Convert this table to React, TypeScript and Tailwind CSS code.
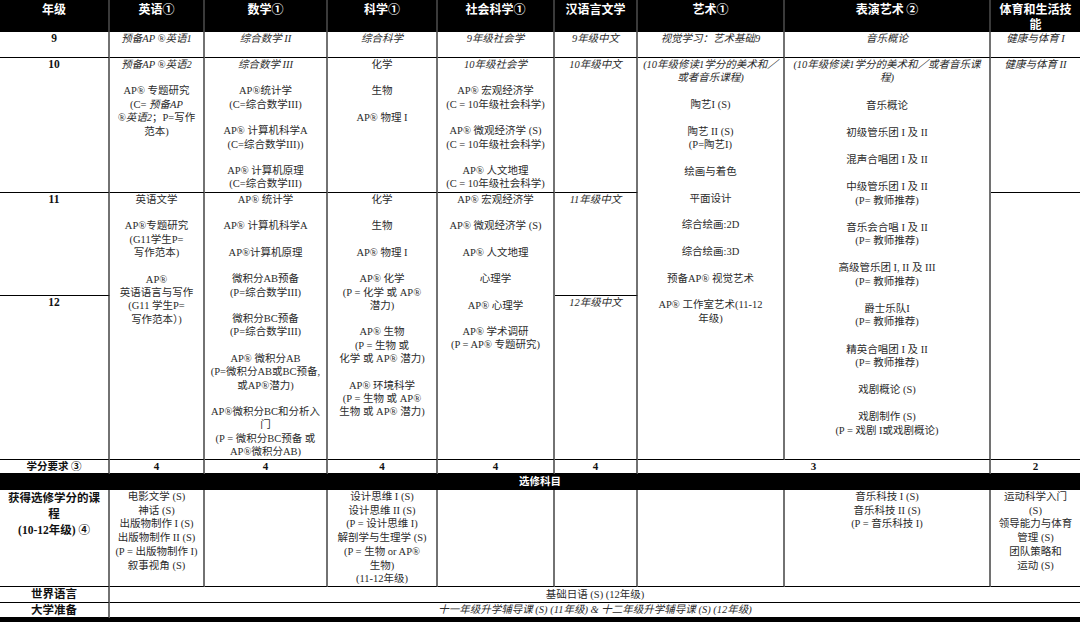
import type { ReactNode } from 'react'

// vertical rules are grey, horizontal rules black, like the printed course chart
const V = 'border-r-2 border-r-[#727272]'
const H = 'border-b border-b-black'
const body = 'flex flex-col items-center gap-[13px] px-[3px] text-center text-[10.5px] leading-[13.4px] text-[#2b2b2b]'

function Cell({ className = '', last = false, children }: { className?: string; last?: boolean; children?: ReactNode }) {
  return <div className={`${H} ${last ? '' : V} ${className}`}>{children}</div>
}

function Head({ className = '', last = false, children }: { className?: string; last?: boolean; children: ReactNode }) {
  return (
    <div className={`bg-black text-white font-bold text-[12px] leading-[15px] text-center px-1 pt-px font-['Noto_Sans_CJK_SC',sans-serif] ${last ? '' : 'border-r-2 border-r-[#3a3a3a]'} ${className}`}>
      {children}
    </div>
  )
}

function P({ lines }: { lines: ReactNode[] }) {
  return (
    <div>
      {lines.map((l, i) => (
        <div key={i} className="whitespace-nowrap">{l}</div>
      ))}
    </div>
  )
}

function Grade({ className, n }: { className: string; n: string }) {
  return (
    <Cell className={`text-center font-bold text-[11.5px] leading-[13.4px] text-[#111] ${className}`}>{n}</Cell>
  )
}

function Credit({ className, n, last = false }: { className: string; n: string; last?: boolean }) {
  return (
    <Cell last={last} className={`text-center font-bold text-[11px] leading-[13px] text-[#111] ${className}`}>{n}</Cell>
  )
}

const tpr = '(P= 教师推荐)'

export default function App() {
  return (
    <div className="w-[1080px] h-[622px] overflow-hidden bg-white font-['Liberation_Serif','Noto_Sans_CJK_SC',serif]">
      <div className="grid grid-cols-[110px_95px_123px_110px_117px_83px_147px_206px_89px] grid-rows-[32px_26px_135px_103px_164px_14px_16px_97px_16px_15px] border-b-4 border-b-black">
        {/* header */}
        <Head className="col-start-1 row-start-1">年级</Head>
        <Head className="col-start-2 row-start-1">英语①</Head>
        <Head className="col-start-3 row-start-1">数学①</Head>
        <Head className="col-start-4 row-start-1">科学①</Head>
        <Head className="col-start-5 row-start-1">社会科学①</Head>
        <Head className="col-start-6 row-start-1">汉语言文学</Head>
        <Head className="col-start-7 row-start-1">艺术①</Head>
        <Head className="col-start-8 row-start-1">表演艺术 ②</Head>
        <Head last className="col-start-9 row-start-1">体育和生活技<br />能</Head>

        {/* grade 9 */}
        <Grade className="col-start-1 row-start-2" n="9" />
        <Cell className={`col-start-2 row-start-2 italic ${body}`}><P lines={['预备AP ®英语1']} /></Cell>
        <Cell className={`col-start-3 row-start-2 italic ${body}`}><P lines={['综合数学 II']} /></Cell>
        <Cell className={`col-start-4 row-start-2 italic ${body}`}><P lines={['综合科学']} /></Cell>
        <Cell className={`col-start-5 row-start-2 italic ${body}`}><P lines={['9年级社会学']} /></Cell>
        <Cell className={`col-start-6 row-start-2 italic ${body}`}><P lines={['9年级中文']} /></Cell>
        <Cell className={`col-start-7 row-start-2 italic ${body}`}><P lines={['视觉学习：艺术基础9']} /></Cell>
        <Cell className={`col-start-8 row-start-2 italic ${body}`}><P lines={['音乐概论']} /></Cell>
        <Cell last className={`col-start-9 row-start-2 italic ${body}`}><P lines={['健康与体育 I']} /></Cell>

        {/* grade 10 */}
        <Grade className="col-start-1 row-start-3" n="10" />
        <Cell className={`col-start-2 row-start-3 ${body}`}>
          <P lines={[<i>预备AP ®英语2</i>]} />
          <P lines={['AP® 专题研究', <>(C= <i>预备AP</i></>, <><i>®英语2</i>；P=写作</>, '范本)']} />
        </Cell>
        <Cell className={`col-start-3 row-start-3 ${body}`}>
          <P lines={[<i>综合数学 III</i>]} />
          <P lines={['AP®统计学', '(C=综合数学III)']} />
          <P lines={['AP® 计算机科学A', '(C=综合数学III))']} />
          <P lines={['AP® 计算机原理', '(C=综合数学III)']} />
        </Cell>
        <Cell className={`col-start-4 row-start-3 ${body}`}>
          <P lines={['化学']} />
          <P lines={['生物']} />
          <P lines={['AP® 物理 I']} />
        </Cell>
        <Cell className={`col-start-5 row-start-3 ${body}`}>
          <P lines={[<i>10年级社会学</i>]} />
          <P lines={['AP® 宏观经济学', '(C = 10年级社会科学)']} />
          <P lines={['AP® 微观经济学 (S)', '(C = 10年级社会科学)']} />
          <P lines={['AP® 人文地理', '(C = 10年级社会科学)']} />
        </Cell>
        <Cell className={`col-start-6 row-start-3 italic ${body}`}><P lines={['10年级中文']} /></Cell>
        <Cell className={`col-start-7 row-start-3 row-span-3 ${body} !gap-[13.3px]`}>
          <P lines={[<i>(10年级修读1学分的美术和／</i>, <i>或者音乐课程)</i>]} />
          <P lines={['陶艺I (S)']} />
          <P lines={['陶艺 II (S)', '(P=陶艺I)']} />
          <P lines={['绘画与着色']} />
          <P lines={['平面设计']} />
          <P lines={['综合绘画:2D']} />
          <P lines={['综合绘画:3D']} />
          <P lines={['预备AP® 视觉艺术']} />
          <P lines={['AP® 工作室艺术(11-12', '年级)']} />
        </Cell>
        <Cell className={`col-start-8 row-start-3 row-span-3 ${body} !gap-[13.8px]`}>
          <P lines={[<i>(10年级修读1学分的美术和／或者音乐课</i>, <i>程)</i>]} />
          <P lines={['音乐概论']} />
          <P lines={['初级管乐团 I 及 II']} />
          <P lines={['混声合唱团 I 及 II']} />
          <P lines={['中级管乐团 I 及 II', tpr]} />
          <P lines={['音乐会合唱 I 及 II', tpr]} />
          <P lines={['高级管乐团 I, II 及 III', tpr]} />
          <P lines={['爵士乐队I', tpr]} />
          <P lines={['精英合唱团 I 及 II', tpr]} />
          <P lines={['戏剧概论 (S)']} />
          <P lines={['戏剧制作 (S)', '(P = 戏剧 I或戏剧概论)']} />
        </Cell>
        <Cell last className={`col-start-9 row-start-3 italic ${body}`}><P lines={['健康与体育  II']} /></Cell>

        {/* grades 11 and 12 */}
        <Grade className="col-start-1 row-start-4" n="11" />
        <Cell className={`col-start-2 row-start-4 row-span-2 ${body}`}>
          <P lines={['英语文学']} />
          <P lines={['AP®专题研究', '(G11学生P=', '写作范本)']} />
          <P lines={['AP®', '英语语言与写作', '(G11 学生P=', '写作范本）)']} />
        </Cell>
        <Cell className={`col-start-3 row-start-4 row-span-2 ${body}`}>
          <P lines={['AP® 统计学']} />
          <P lines={['AP® 计算机科学A']} />
          <P lines={['AP®计算机原理']} />
          <P lines={['微积分AB预备', '(P=综合数学III)']} />
          <P lines={['微积分BC预备', '(P=综合数学III)']} />
          <P lines={['AP® 微积分AB', '(P=微积分AB或BC预备,', '或AP®潜力)']} />
          <P lines={['AP®微积分BC和分析入', '门', '(P = 微积分BC预备 或', 'AP®微积分AB)']} />
        </Cell>
        <Cell className={`col-start-4 row-start-4 row-span-2 ${body}`}>
          <P lines={['化学']} />
          <P lines={['生物']} />
          <P lines={['AP® 物理 I']} />
          <P lines={['AP® 化学', '(P = 化学 或 AP®', '潜力)']} />
          <P lines={['AP® 生物', '(P = 生物 或', '化学 或 AP® 潜力)']} />
          <P lines={['AP® 环境科学', '(P = 生物 或 AP®', '生物 或 AP® 潜力)']} />
        </Cell>
        <Cell className={`col-start-5 row-start-4 row-span-2 ${body}`}>
          <P lines={['AP® 宏观经济学']} />
          <P lines={['AP® 微观经济学 (S)']} />
          <P lines={['AP® 人文地理']} />
          <P lines={['心理学']} />
          <P lines={['AP® 心理学']} />
          <P lines={['AP® 学术调研', '(P = AP® 专题研究)']} />
        </Cell>
        <Cell className={`col-start-6 row-start-4 italic ${body}`}><P lines={['11年级中文']} /></Cell>
        <Cell last className="col-start-9 row-start-4 row-span-2" />
        <Grade className="col-start-1 row-start-5" n="12" />
        <Cell className={`col-start-6 row-start-5 italic ${body}`}><P lines={['12年级中文']} /></Cell>

        {/* credits */}
        <Cell className="col-start-1 row-start-6 text-center font-bold text-[10.5px] leading-[13px] text-[#111]">学分要求 ③</Cell>
        <Credit className="col-start-2 row-start-6" n="4" />
        <Credit className="col-start-3 row-start-6" n="4" />
        <Credit className="col-start-4 row-start-6" n="4" />
        <Credit className="col-start-5 row-start-6" n="4" />
        <Credit className="col-start-6 row-start-6" n="4" />
        <Credit className="col-start-7 col-span-2 row-start-6" n="3" />
        <Credit last className="col-start-9 row-start-6" n="2" />

        <div className="col-start-1 col-span-9 row-start-7 bg-black text-white text-center font-bold text-[10.5px] leading-[16px]">选修科目</div>

        {/* electives */}
        <Cell className="col-start-1 row-start-8 text-center font-bold text-[11.5px] leading-[16px] text-[#111]">
          获得选修学分的课<br />程<br />(10-12年级) ④
        </Cell>
        <Cell className={`col-start-2 row-start-8 ${body} !leading-[13.7px]`}>
          <P lines={['电影文学 (S)', '神话 (S)', '出版物制作 I (S)', '出版物制作 II (S)', '(P = 出版物制作 I)', '叙事视角 (S)']} />
        </Cell>
        <Cell className="col-start-3 row-start-8" />
        <Cell className={`col-start-4 row-start-8 ${body} !leading-[13.7px]`}>
          <P lines={['设计思维 I (S)', '设计思维 II (S)', '(P = 设计思维 I)', '解剖学与生理学 (S)', '(P = 生物 or AP®', '生物)', '(11-12年级)']} />
        </Cell>
        <Cell className="col-start-5 row-start-8" />
        <Cell className="col-start-6 row-start-8" />
        <Cell className="col-start-7 row-start-8" />
        <Cell className={`col-start-8 row-start-8 ${body} !leading-[13.7px]`}>
          <P lines={['音乐科技 I (S)', '音乐科技 II (S)', '(P = 音乐科技 I)']} />
        </Cell>
        <Cell last className={`col-start-9 row-start-8 ${body} !leading-[13.7px]`}>
          <P lines={['运动科学入门', '(S)', '领导能力与体育', '管理 (S)', '团队策略和', '运动 (S)']} />
        </Cell>

        <Cell className="col-start-1 row-start-9 text-center font-bold text-[11.5px] leading-[15px] text-[#111]">世界语言</Cell>
        <Cell last className="col-start-2 col-span-8 row-start-9 text-center text-[10.5px] leading-[15px] text-[#2b2b2b]">基础日语 (S) (12年级)</Cell>
        <Cell className="col-start-1 row-start-10 text-center font-bold text-[11.5px] leading-[14px] text-[#111]">大学准备</Cell>
        <Cell last className="col-start-2 col-span-8 row-start-10 text-center italic text-[10.5px] leading-[14px] text-[#2b2b2b]">
          十一年级升学辅导课 (S) (11年级) &amp; 十二年级升学辅导课 (S) (12年级)
        </Cell>
      </div>
    </div>
  )
}
